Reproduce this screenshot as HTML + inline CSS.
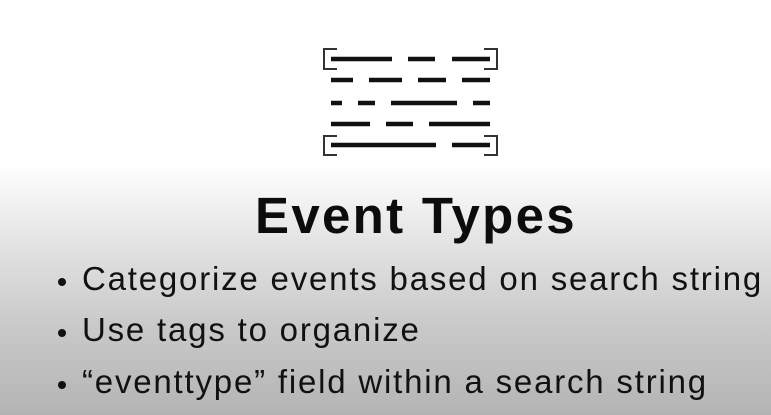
<!DOCTYPE html>
<html><head><meta charset="utf-8"><style>
html,body{margin:0;padding:0}
body{width:771px;height:415px;overflow:hidden;position:relative;font-family:"Liberation Sans",sans-serif;color:#111;
background:linear-gradient(to bottom,#fff 0px,#fff 165px,#e4e4e4 240px,#c8c8c8 330px,#b4b4b4 415px);}
.t{position:absolute;white-space:nowrap;line-height:1}
.h{font-size:51px;font-weight:bold;left:255px;top:190px;letter-spacing:2.3px;color:#0c0c0c}
.b{font-size:33px;left:82px;letter-spacing:1.8px}
.d{position:absolute;width:8px;height:8px;border-radius:50%;background:#111;left:58px}
</style></head><body>
<svg width="771" height="170" style="position:absolute;left:0;top:0">
<g stroke="#111" stroke-width="4.5" stroke-linecap="butt">
<line x1="331" y1="59" x2="392" y2="59"/><line x1="408" y1="59" x2="435" y2="59"/><line x1="452" y1="59" x2="490" y2="59"/>
<line x1="331" y1="80" x2="353" y2="80"/><line x1="369" y1="80" x2="402" y2="80"/><line x1="418" y1="80" x2="446" y2="80"/><line x1="462" y1="80" x2="490" y2="80"/>
<line x1="331" y1="103" x2="342" y2="103"/><line x1="358" y1="103" x2="375" y2="103"/><line x1="391" y1="103" x2="457" y2="103"/><line x1="473" y1="103" x2="490" y2="103"/>
<line x1="331" y1="124" x2="370" y2="124"/><line x1="386" y1="124" x2="413" y2="124"/><line x1="429" y1="124" x2="490" y2="124"/>
<line x1="331" y1="145" x2="436" y2="145"/><line x1="452" y1="145" x2="490" y2="145"/>
</g>
<g stroke="#333" stroke-width="2" fill="none">
<path d="M337 49 H324 V69 H337"/><path d="M484 49 H497 V69 H484"/>
<path d="M337 136 H324 V155 H337"/><path d="M484 136 H497 V155 H484"/>
</g>
</svg>
<div class="t h">Event Types</div>
<div class="d" style="top:278px"></div>
<div class="d" style="top:329px"></div>
<div class="d" style="top:381px"></div>
<div class="t b" style="top:262px">Categorize events based on search string</div>
<div class="t b" style="top:313px">Use tags to organize</div>
<div class="t b" style="top:365px">“eventtype” field within a search string</div>
</body></html>
